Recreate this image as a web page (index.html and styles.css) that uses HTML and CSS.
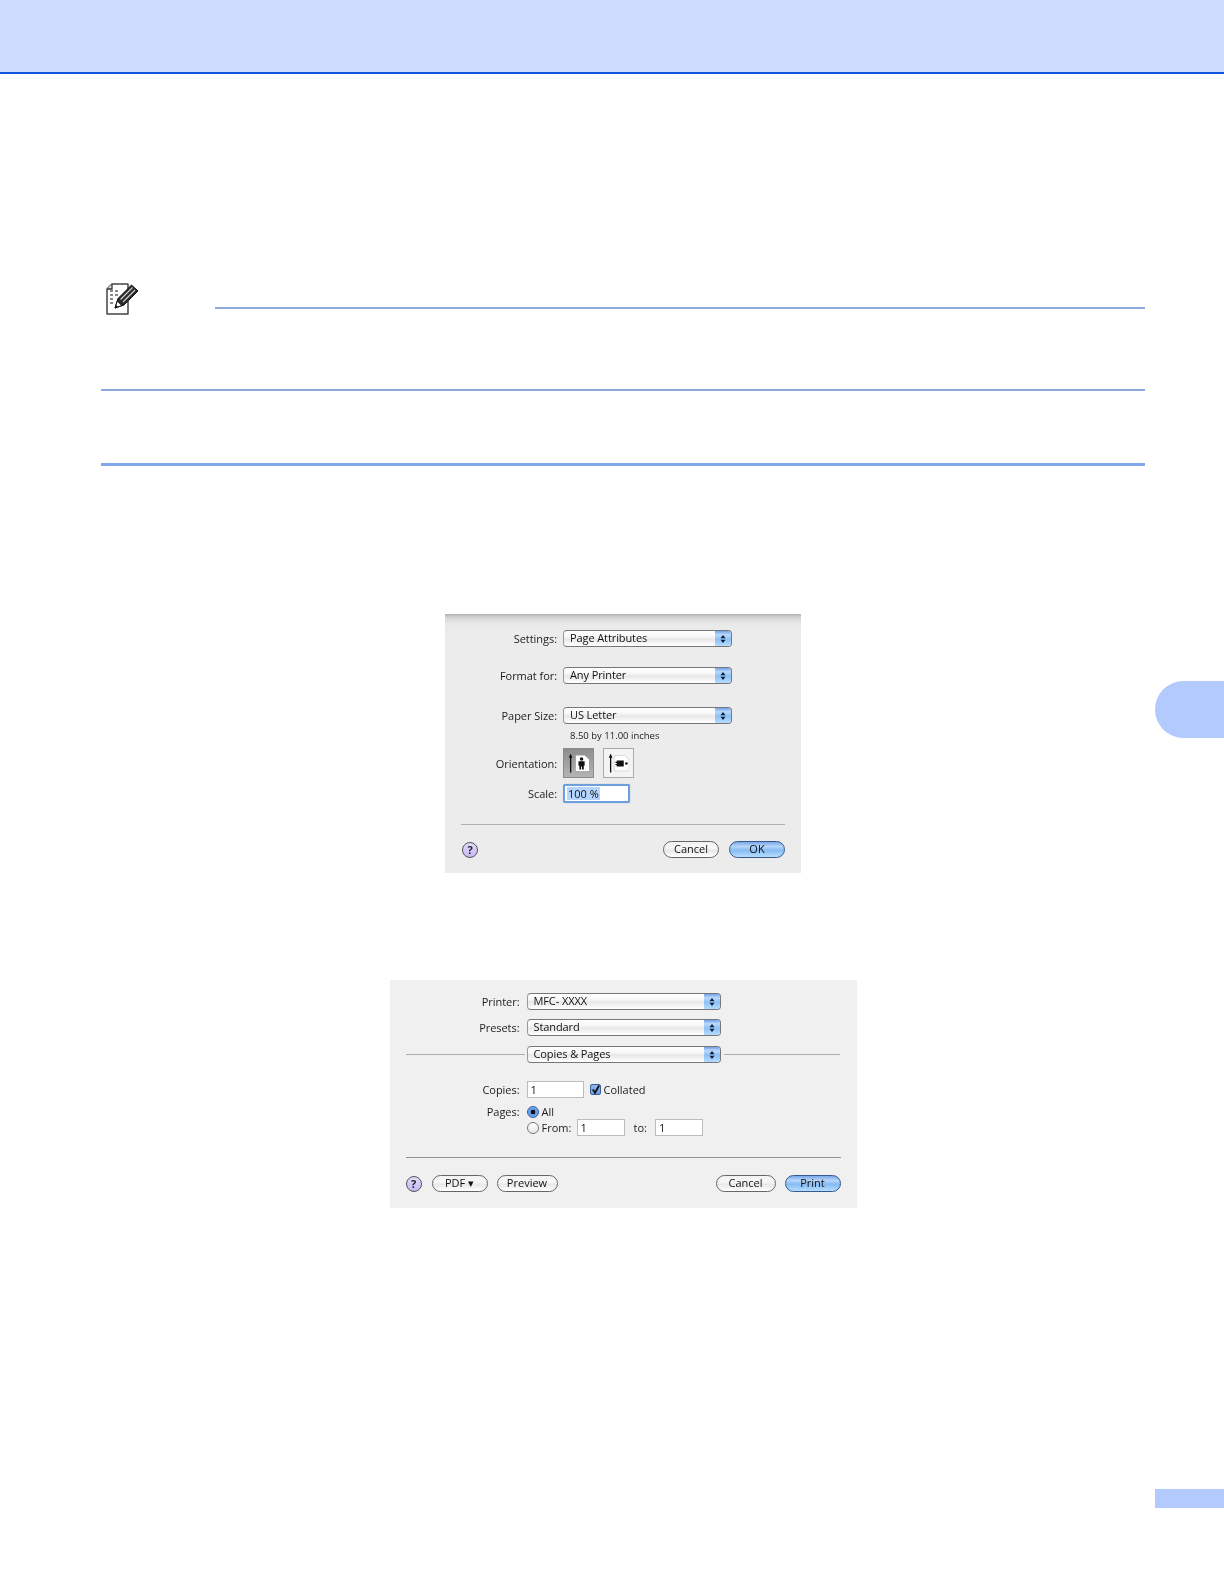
FILE: index.html
```html
<!DOCTYPE html>
<html lang="en">
<head>
<meta charset="utf-8">
<title>Page Setup and Print dialogs</title>
<link rel="stylesheet" href="styles.css">
</head>
<body>
<svg class="defs" width="0" height="0" aria-hidden="true">
  <symbol id="updown" viewBox="0 0 8 12">
    <path d="M4 2 6.500 5.200H1.500zM4 10 1.500 6.800h5z" fill="#10203a"/>
  </symbol>
  <symbol id="arrowbar" viewBox="0 0 6 26">
    <path d="M3 0 5.500 6H3.900V26H2.100V6H.5z" fill="#111"/>
  </symbol>
</svg>
<header class="top-band"></header>
<main class="page">
  <section class="note">
    <svg class="note-icon" viewBox="0 0 33 33" aria-hidden="true">
      <path d="M6 1H22V31H1V6z" fill="#fff" stroke="#444" stroke-width="1.500" stroke-linejoin="round"/>
      <path d="M6 1V6H1" fill="#ddd" stroke="#333" stroke-width="1.300"/>
      <path d="M4 8h3M9 8h3M4 12h3M9 12h3M4 16h3M4 20h3" stroke="#8a8a8a" stroke-width="2"/>
      <path d="M25.500 2 32 8 18 22 9 25 12 15.500z" fill="#2a2a2a" stroke="#111" stroke-width="1"/>
      <path d="M26.500 4.500 14.500 16.500M29 7 17 19" stroke="#cfcfcf" stroke-width="1.200"/>
      <path d="M9 25 11.300 18 15.800 22.500z" fill="#fff" stroke="#111" stroke-width="1"/>
      <path d="M9 25 10 22 12 24z" fill="#111"/>
    </svg>
    <div class="note-line"></div>
  </section>
  <div class="rule-thin"></div>
  <div class="rule-thick"></div>

  <section class="dialog dialog-setup">
    <div class="row">
      <span class="label">Settings:</span>
      <div class="popup"><span class="popup-text">Page Attributes</span><span class="stepper"><svg class="updown"><use href="#updown"/></svg></span></div>
    </div>
    <div class="row row-format">
      <span class="label">Format for:</span>
      <div class="popup"><span class="popup-text">Any Printer</span><span class="stepper"><svg class="updown"><use href="#updown"/></svg></span></div>
    </div>
    <div class="row row-paper">
      <span class="label">Paper Size:</span>
      <div class="popup"><span class="popup-text">US Letter</span><span class="stepper"><svg class="updown"><use href="#updown"/></svg></span></div>
    </div>
    <div class="paper-hint">8.50 by 11.00 inches</div>
    <div class="row row-orient">
      <span class="label">Orientation:</span>
      <div class="orient orient-on">
        <svg class="orient-icon" viewBox="0 0 24 26" aria-hidden="true">
          <use href="#arrowbar" x="0" y="2" width="6" height="22"/>
          <path d="M9 4.500H19L24 9V22H9z" fill="#fff"/>
          <circle cx="15.500" cy="8.500" r="2" fill="#111"/>
          <path d="M12 11H19V16H18V20.500H16V17H15V20.500H13V16H12z" fill="#111"/>
        </svg>
      </div>
      <div class="orient orient-off">
        <svg class="orient-icon" viewBox="0 0 24 26" aria-hidden="true">
          <use href="#arrowbar" x="0" y="2" width="6" height="22"/>
          <path d="M7 4.500H19L24 9V22H7z" fill="#fff" stroke="#bbb" stroke-width=".6"/>
          <circle cx="21" cy="13.500" r="1.500" fill="#111"/>
          <path d="M10 10H18V17H10V15.500H8.500V14H10V13H8.500V11.500H10z" fill="#111"/>
        </svg>
      </div>
    </div>
    <div class="row row-scale">
      <span class="label">Scale:</span>
      <div class="scale-input"><span class="scale-value">100 %</span></div>
    </div>
    <div class="sep sep-setup"></div>
    <div class="foot foot-setup">
      <span class="help">?</span>
      <span class="spacer"></span>
      <span class="btn btn-setup-cancel">Cancel</span>
      <span class="btn btn-default btn-ok">OK</span>
    </div>
  </section>

  <section class="dialog dialog-print">
    <div class="row">
      <span class="label label-print">Printer:</span>
      <div class="popup popup-print"><span class="popup-text">MFC- XXXX</span><span class="stepper"><svg class="updown"><use href="#updown"/></svg></span></div>
    </div>
    <div class="row row-presets">
      <span class="label label-print">Presets:</span>
      <div class="popup popup-print"><span class="popup-text">Standard</span><span class="stepper"><svg class="updown"><use href="#updown"/></svg></span></div>
    </div>
    <div class="row row-section">
      <span class="section-line section-line-left"></span>
      <div class="popup popup-print"><span class="popup-text">Copies &amp; Pages</span><span class="stepper"><svg class="updown"><use href="#updown"/></svg></span></div>
      <span class="section-line section-line-right"></span>
    </div>
    <div class="row row-copies">
      <span class="label label-print">Copies:</span>
      <div class="field field-copies">1</div>
      <span class="check"><svg class="check-mark" viewBox="0 0 10 10" aria-hidden="true"><path d="M2 4.500 4.500 8 9 0" fill="none" stroke="#111" stroke-width="2"/></svg></span>
      <span class="opt-text">Collated</span>
    </div>
    <div class="row row-pages">
      <span class="label label-print">Pages:</span>
      <span class="radio radio-on"></span>
      <span class="opt-text opt-radio">All</span>
    </div>
    <div class="row row-from">
      <span class="label label-print"></span>
      <span class="radio"></span>
      <span class="opt-text opt-radio opt-from">From:</span>
      <div class="field field-range">1</div>
      <span class="opt-text opt-to">to:</span>
      <div class="field field-range">1</div>
    </div>
    <div class="sep sep-print"></div>
    <div class="foot foot-print">
      <span class="help">?</span>
      <span class="btn btn-pdf">PDF ▾</span>
      <span class="btn btn-preview">Preview</span>
      <span class="spacer"></span>
      <span class="btn btn-print-cancel">Cancel</span>
      <span class="btn btn-default btn-print">Print</span>
    </div>
  </section>
</main>
<div class="side-tab"></div>
<div class="page-box"></div>
</body>
</html>
```

FILE: styles.css
```css
* { box-sizing: border-box; }
html, body { margin: 0; padding: 0; background: #fff; }
body { position: relative; width: 1224px; height: 1580px; overflow: hidden; font-family: "Open Sans", "Liberation Sans", sans-serif; color: #1c1c1c; }
.defs { position: absolute; }

.top-band { height: 74px; background: #cbdcff; border-bottom: 2px solid #0f55e0; }

.page { display: flex; flex-direction: column; align-items: center; padding: 209px 79px 0 101px; }

.note { align-self: stretch; display: flex; align-items: flex-end; height: 33px; padding-left: 5px; }
.note-icon { width: 33px; height: 33px; flex: none; }
.note-line { flex: 1; height: 2px; margin: 0 0 7px 76px; background: #8faadf; }

.rule-thin { align-self: stretch; height: 2px; margin-top: 73px; background: #8ea8dc; }
.rule-thick { align-self: stretch; height: 3px; margin-top: 72px; background: #84a6ea; }

.dialog { flex: none; font-size: 11px; filter: blur(.4px); }
.dialog-setup { width: 356px; height: 259px; margin-top: 148px; padding-top: 16px; background: linear-gradient(#b4b4b4, #d6d6d6 4px, #e9e9e9 10px, #ececec 20px); }
.dialog-print { width: 467px; height: 228px; margin-top: 107px; padding: 13px 16px 0 16px; background: #f0f0f0; }

.row { display: flex; align-items: center; height: 17px; }
.label { flex: none; width: 112px; margin-right: 6px; text-align: right; white-space: nowrap; letter-spacing: -.05px; }
.label-print { width: 114px; margin-right: 7px; }

.popup { flex: none; display: flex; align-items: stretch; width: 169px; height: 17px; border: 1px solid #777; border-left-color: #999; border-radius: 4px; background: linear-gradient(#fff, #f8f8f8 35%, #e8e8e8 55%, #fbfbfb 90%, #fff); overflow: hidden; }
.popup-print { width: 194px; }
.popup-text { flex: 1; padding-left: 6px; line-height: 14px; white-space: nowrap; letter-spacing: -.1px; color: #111; }
.stepper { flex: none; display: flex; align-items: center; justify-content: center; width: 16px; background: linear-gradient(#6ea2ea, #bcd9fa 25%, #8cc0f5 55%, #b6dcff); }
.updown { width: 8px; height: 12px; }

.row-format { margin-top: 20px; }
.row-paper { margin-top: 23px; }
.paper-hint { margin: 6px 0 0 125px; height: 12px; font-size: 9.5px; line-height: 12px; letter-spacing: 0; white-space: nowrap; }
.row-orient { height: 30px; margin-top: 6px; }
.orient { flex: none; display: flex; align-items: center; justify-content: center; width: 31px; height: 30px; border: 1px solid #8b8b8b; }
.orient-on { background: linear-gradient(#8d8d8d, #b4b4b4); }
.orient-off { margin-left: 9px; border-color: #aaa; background: #f4f4f4; }
.orient-icon { width: 21px; height: 24px; }

.row-scale { height: 19px; margin-top: 6px; }
.scale-input { flex: none; width: 67px; height: 19px; padding: 1px 2px; border: 2px solid #6ba0dc; border-radius: 2px; background: #fff; box-shadow: 0 0 1px #7fb0e8; line-height: 13px; }
.scale-value { display: inline-block; height: 13px; padding: 0 1px; background: #b5d5ff; color: #111; }

.sep { height: 1px; background: #b0b0b0; }
.sep-setup { margin: 21px 16px 0; }
.sep-print { margin-top: 21px; background: #8f8f8f; }

.foot { display: flex; align-items: center; height: 17px; }
.foot-setup { margin-top: 16px; padding: 0 16px 0 17px; }
.foot-print { margin-top: 17px; }
.spacer { flex: 1; }

.help { flex: none; width: 16px; height: 16px; border: 1px solid #555; border-radius: 50%; background: linear-gradient(#e2dafb, #c6b8f3); font-weight: 700; font-size: 11px; line-height: 14px; text-align: center; color: #222; }

.btn { flex: none; height: 17px; border: 1px solid #666; border-radius: 9px; background: linear-gradient(#f2f2f2, #f8f8f8 40%, #e8e8e8 55%, #fff); line-height: 14px; text-align: center; white-space: nowrap; color: #111; }
.btn-default { border-color: #34588f; background: linear-gradient(#7ba8e8, #b6d5fa 30%, #86bbf3 55%, #b6deff); }
.btn-setup-cancel { width: 56px; }
.btn-ok { width: 56px; margin-left: 10px; }
.btn-pdf { width: 56px; margin-left: 10px; }
.btn-preview { width: 61px; margin-left: 9px; }
.btn-print-cancel { width: 60px; }
.btn-print { width: 56px; margin-left: 9px; }

.row-presets { margin-top: 9px; }
.row-section { margin-top: 10px; }
.section-line { flex: none; height: 1px; background: #aeaeae; }
.section-line-left { width: 119px; margin-right: 2px; }
.section-line-right { width: 116px; margin-left: 3px; }

.row-copies { margin-top: 18px; }
.field { flex: none; height: 17px; padding-left: 3px; border: 1px solid #bcbcbc; background: #fff; line-height: 15px; color: #111; }
.field-copies { width: 57px; }
.check { flex: none; display: flex; align-items: center; justify-content: center; width: 11px; height: 11px; margin-left: 6px; border: 1px solid #3b5f95; border-radius: 2px; background: linear-gradient(#8fb6ec, #6d9fe4); }
.check-mark { width: 10px; height: 10px; }
.opt-text { flex: none; margin-left: 3px; white-space: nowrap; }

.row-pages { height: 13px; margin-top: 7px; }
.row-from { height: 17px; margin-top: 1px; }
.radio { flex: none; width: 12px; height: 12px; border: 1px solid #777; border-radius: 50%; background: linear-gradient(#fff, #e8e8e8); }
.radio-on { display: flex; align-items: center; justify-content: center; border-color: #2f5e9f; background: radial-gradient(circle, #111 0 2px, #5f97e6 2.6px, #8cb8f0); }
.opt-radio { margin-left: 3px; }
.opt-from { width: 28px; margin-right: 7px; }
.opt-to { margin: 0 8px 0 9px; }
.field-range { width: 48px; }

.side-tab { position: absolute; top: 681px; left: 1155px; width: 69px; height: 57px; border-radius: 29px 0 0 29px; background: #b3caff; }
.page-box { position: absolute; top: 1489px; left: 1155px; width: 69px; height: 19px; background: #b3caff; }
```
